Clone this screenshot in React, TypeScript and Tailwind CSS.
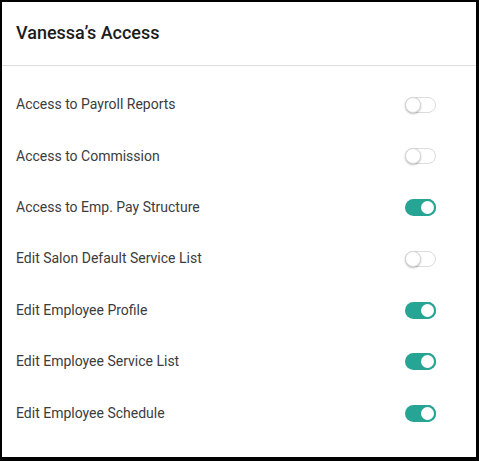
import React from "react";

type Perm = { label: string; on: boolean };

const perms: Perm[] = [
  { label: "Access to Payroll Reports", on: false },
  { label: "Access to Commission", on: false },
  { label: "Access to Emp. Pay Structure", on: true },
  { label: "Edit Salon Default Service List", on: false },
  { label: "Edit Employee Profile", on: true },
  { label: "Edit Employee Service List", on: true },
  { label: "Edit Employee Schedule", on: true },
];

function Toggle({ on }: { on: boolean }) {
  return on ? (
    <div className="relative h-[17px] w-[31px] rounded-full bg-[#26a494]">
      <div className="absolute right-0 top-0 h-[17px] w-[17px] rounded-full border-2 border-[#26a494] bg-white" />
    </div>
  ) : (
    <div className="relative h-[16px] w-[31px] rounded-full border border-[#dcdcdc] bg-white">
      <div className="absolute -left-px -top-px h-[16px] w-[16px] rounded-full border border-[#d6d6d6] bg-white shadow-[0_1px_2px_rgba(0,0,0,0.25)]" />
    </div>
  );
}

export default function App() {
  return (
    <div
      className="h-[461px] w-[479px] border-b-4 border-l-2 border-r-[3px] border-t-2 border-black bg-white"
      style={{ fontFamily: "Roboto, 'Open Sans', sans-serif" }}
    >
      <div className="flex h-[63px] items-center px-[14px] pb-[3px]">
        <h1 className="text-[18px] font-medium text-[#1c1c1c]">Vanessa’s Access</h1>
      </div>
      <div className="h-px bg-[#dedede]" />
      <div className="pt-[13px]">
        {perms.map((p) => (
          <div key={p.label} className="flex h-[51.4px] items-center justify-between pl-[14px] pr-[40px]">
            <span className="text-[14px] text-[#3c3c3c]">{p.label}</span>
            <Toggle on={p.on} />
          </div>
        ))}
      </div>
    </div>
  );
}
